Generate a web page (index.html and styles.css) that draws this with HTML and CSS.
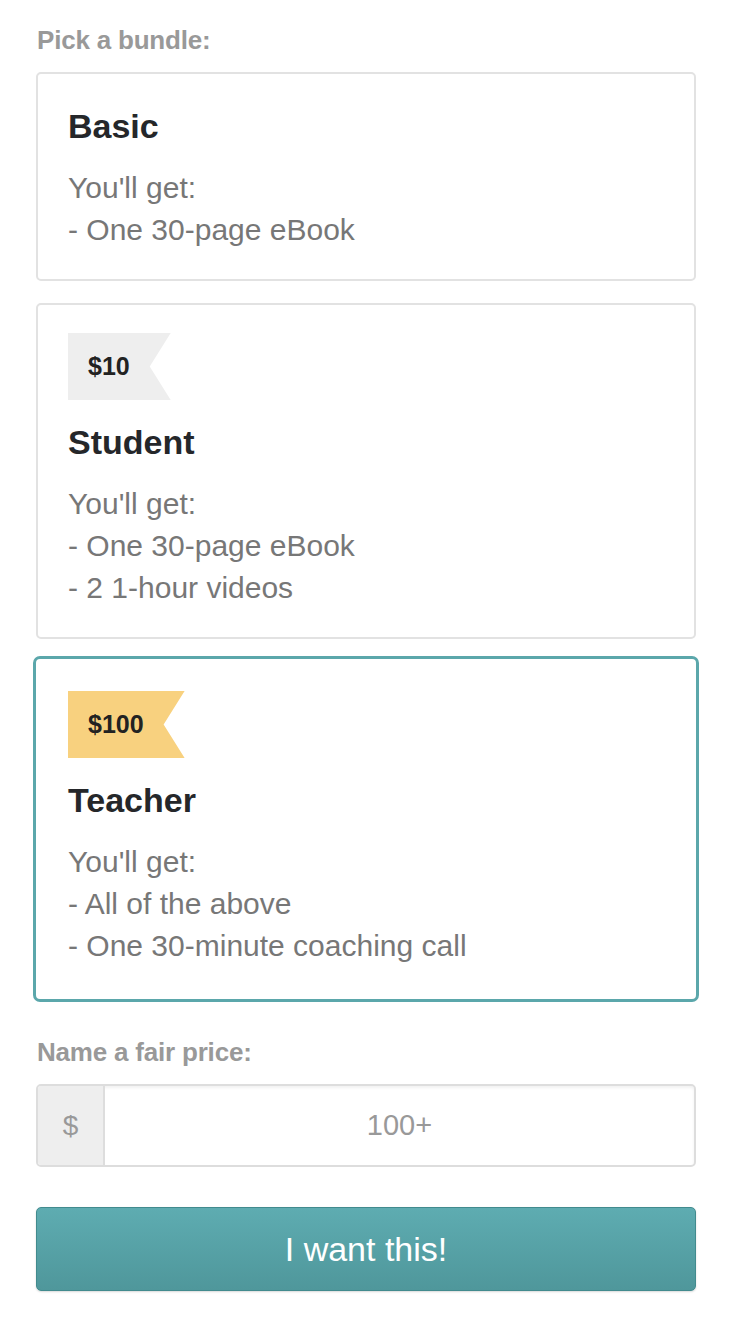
FILE: index.html
```html
<!DOCTYPE html>
<html lang="en">

<head>
    <meta charset="UTF-8">
    <meta name="viewport" content="width=device-width, initial-scale=1.0">
    <title>Pick a bundle</title>
    <link rel="stylesheet" href="styles.css">
</head>

<body>

    <div class="container">
        <div class="field-label">Pick a bundle:</div>

        <div class="bundles">
            <div class="bundle">
                <h3 class="bundle-title">Basic</h3>
                <p class="bundle-desc">You'll get:<br>- One 30-page eBook</p>
            </div>

            <div class="bundle">
                <div class="price-tag">$10</div>
                <h3 class="bundle-title">Student</h3>
                <p class="bundle-desc">You'll get:<br>- One 30-page eBook<br>- 2 1-hour videos</p>
            </div>

            <!-- selected bundle -->
            <div class="bundle selected">
                <div class="price-tag gold">$100</div>
                <h3 class="bundle-title">Teacher</h3>
                <p class="bundle-desc">You'll get:<br>- All of the above<br>- One 30-minute coaching call</p>
            </div>
        </div>

        <div class="field-label price-label">Name a fair price:</div>

        <div class="price-input">
            <span class="currency">$</span>
            <input type="text" placeholder="100+">
        </div>

        <button class="buy-btn">I want this!</button>
    </div>

</body>

</html>
```

FILE: styles.css
```css
body {
    font-family: "Liberation Sans", Arial, sans-serif;
    background-color: #fff;
    margin: 0;
    padding: 0;
    color: #222;
}

.container {
    padding: 26px 40px 36px 36px;
}

.field-label {
    font-size: 26px;
    font-weight: bold;
    color: #999;
    line-height: 28px;
    margin-bottom: 18px;
    padding-left: 1px;
    letter-spacing: -0.2px;
}

.price-label {
    margin-top: 36px;
}

.bundles {
    display: flex;
    flex-direction: column;
    gap: 22px;
}

.bundle {
    border: 2px solid #e2e2e2;
    border-radius: 5px;
    padding: 28px 30px;
}

/* selected bundle gets a thick teal border */
.bundle.selected {
    border: 3px solid #5ba7ab;
    border-radius: 7px;
    padding: 32px;
    margin: -5px -3px 0;
}

.price-tag {
    display: inline-block;
    height: 67px;
    line-height: 67px;
    padding: 0 41px 0 20px;
    background-color: #eee;
    font-size: 25px;
    font-weight: bold;
    color: #222;
    margin-bottom: 18px;
    clip-path: polygon(0 0, 100% 0, calc(100% - 21px) 50%, 100% 100%, 0 100%);
}

.price-tag.gold {
    background-color: #f8d17f;
}

.bundle-title {
    margin: 7px 0 0;
    font-size: 34px;
    line-height: 34px;
    font-weight: bold;
    color: #25272a;
}

.bundle-desc {
    margin: 24px 0 0;
    font-size: 30px;
    line-height: 42px;
    color: #777;
}

.price-input {
    display: flex;
    height: 79px;
    border: 2px solid #ddd;
    border-radius: 5px;
    overflow: hidden;
    box-shadow: inset 0 2px 3px rgba(0, 0, 0, 0.06);
}

.currency {
    width: 65px;
    background-color: #eee;
    border-right: 2px solid #ddd;
    color: #999;
    font-size: 28px;
    display: flex;
    align-items: center;
    justify-content: center;
}

.price-input input {
    flex: 1;
    border: none;
    outline: none;
    background: transparent;
    font-family: "Liberation Sans", Arial, sans-serif;
    font-size: 29px;
    text-align: center;
    color: #999;
    padding: 0;
    min-width: 0;
}

.price-input input::placeholder {
    color: #999;
}

.buy-btn {
    display: block;
    width: 100%;
    height: 84px;
    margin-top: 40px;
    border: 1px solid #428b8e;
    border-radius: 5px;
    background: linear-gradient(#5eacb1, #4f979b);
    color: #fff;
    font-family: "Liberation Sans", Arial, sans-serif;
    font-size: 34px;
    cursor: pointer;
    box-shadow: 0 1px 2px rgba(0, 0, 0, 0.15);
}
```
